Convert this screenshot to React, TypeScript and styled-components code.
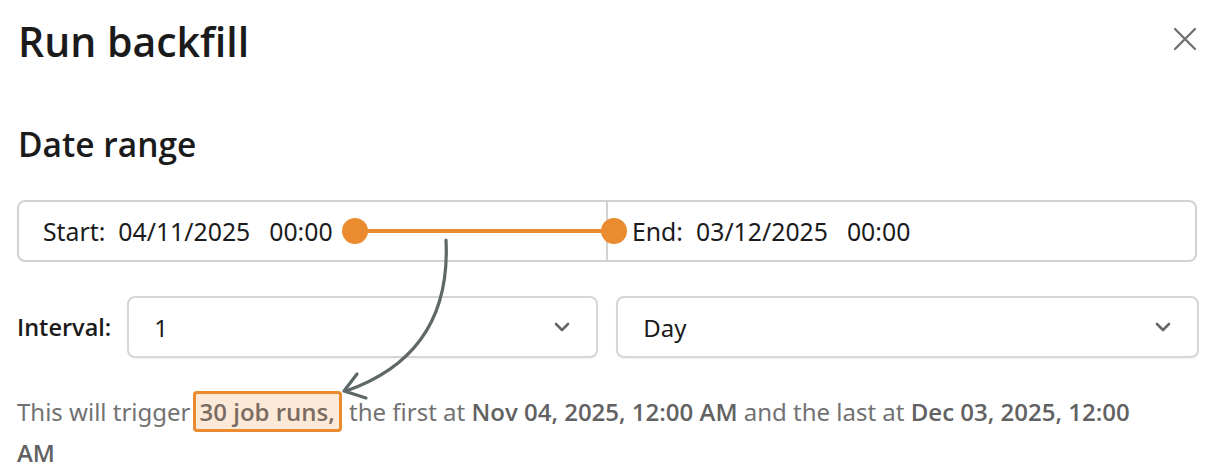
import styled, { createGlobalStyle } from "styled-components";

const Global = createGlobalStyle`
  html, body {
    margin: 0;
    padding: 0;
    background: #ffffff;
  }
  body {
    font-family: "Noto Sans", "Open Sans", sans-serif;
    color: #1b1b1b;
  }
`;

const semibold = `"Open Sans", "Noto Sans", sans-serif`;

const Dialog = styled.div`
  width: 1216px;
  box-sizing: border-box;
  padding: 16px 17px 0 17px;
`;

const Header = styled.div`
  display: flex;
  align-items: center;
  justify-content: space-between;
  height: 50px;
`;

const Title = styled.h1`
  margin: 0;
  font-family: ${semibold};
  font-size: 41px;
  line-height: 50px;
  font-weight: 600;
  color: #1b1b1b;
  padding-left: 1px;
`;

const CloseButton = styled.button`
  border: none;
  background: none;
  padding: 0;
  margin: 0 2px 5px 0;
  width: 24px;
  height: 24px;
  display: flex;
  align-items: center;
  justify-content: center;
  cursor: pointer;
`;

const Section = styled.h2`
  margin: 58px 0 0 1px;
  font-family: ${semibold};
  font-size: 33.5px;
  line-height: 40px;
  font-weight: 600;
  color: #1b1b1b;
`;

const RangeBox = styled.div`
  position: relative;
  margin-top: 36px;
  display: flex;
  height: 62px;
  box-sizing: border-box;
  border: 2px solid #d2d2d2;
  border-radius: 8px;
  width: 1180px;
`;

const RangeHalf = styled.div<{ $divider?: boolean }>`
  flex: 1;
  display: flex;
  align-items: center;
  padding: 0 24px;
  font-size: 24.8px;
  color: #1b1b1b;
  border-left: ${(p) => (p.$divider ? "2px solid #d2d2d2" : "none")};
`;

const FieldLabel = styled.span`
  margin-right: 13px;
`;

const Time = styled.span`
  margin-left: 19px;
`;

const Connector = styled.div`
  position: absolute;
  left: 323px;
  top: 50%;
  width: 285px;
  height: 26px;
  transform: translateY(-50%);
  display: flex;
  align-items: center;
`;

const Dot = styled.span`
  width: 26px;
  height: 26px;
  border-radius: 50%;
  background: #e98b2e;
  flex: 0 0 auto;
`;

const Line = styled.span`
  flex: 1;
  height: 4px;
  background: #e98b2e;
  margin: 0 -2px;
`;

const IntervalRow = styled.div`
  display: flex;
  align-items: center;
  margin-top: 34px;
  gap: 16px;
`;

const IntervalLabel = styled.span`
  font-family: ${semibold};
  font-size: 23.5px;
  font-weight: 600;
  color: #1b1b1b;
`;

const Select = styled.div<{ $width?: number }>`
  flex: ${(p) => (p.$width ? `0 0 ${p.$width}px` : "1")};
  height: 62px;
  box-sizing: border-box;
  border: 2px solid #d6d6d6;
  border-radius: 8px;
  display: flex;
  align-items: center;
  justify-content: space-between;
  padding: 0 26px 0 25px;
  font-size: 24px;
  color: #1b1b1b;
  box-shadow: 0 1px 2px rgba(0, 0, 0, 0.06);
  & + & {
    margin-left: 2px;
  }
`;

const Summary = styled.p`
  margin: 33px 0 0 0;
  font-size: 24px;
  line-height: 41px;
  color: #727272;
  width: 1150px;
`;

const Strong = styled.b`
  font-family: ${semibold};
  font-weight: 600;
  color: #626262;
`;

const Highlight = styled.span`
  padding: 1px 4px;
  margin: 0 1px 0 2px;
  border: 3px solid #e98b2e;
  border-radius: 4px;
  background: #fde9d8;
  font-family: ${semibold};
  font-weight: 600;
  color: #7a6c62;
`;

const Annotation = styled.svg`
  position: absolute;
  left: 0;
  top: 0;
  pointer-events: none;
`;

function Chevron() {
  return (
    <svg width="16" height="10" viewBox="0 0 16 10">
      <polyline
        points="2,2 8,8 14,2"
        fill="none"
        stroke="#666"
        strokeWidth="2.6"
        strokeLinecap="round"
        strokeLinejoin="round"
      />
    </svg>
  );
}

export default function App() {
  return (
    <>
      <Global />
      <Dialog>
        <Header>
          <Title>Run backfill</Title>
          <CloseButton aria-label="Close">
            <svg width="24" height="24" viewBox="0 0 24 24">
              <path
                d="M2 2 L22 22 M22 2 L2 22"
                stroke="#6f6f6f"
                strokeWidth="2.3"
                strokeLinecap="round"
              />
            </svg>
          </CloseButton>
        </Header>

        <Section>Date range</Section>

        <RangeBox>
          <RangeHalf>
            <FieldLabel>Start:</FieldLabel>
            04/11/2025<Time>00:00</Time>
          </RangeHalf>
          <RangeHalf $divider>
            <FieldLabel>End:</FieldLabel>
            03/12/2025<Time>00:00</Time>
          </RangeHalf>
          <Connector>
            <Dot />
            <Line />
            <Dot />
          </Connector>
        </RangeBox>

        <IntervalRow>
          <IntervalLabel>Interval:</IntervalLabel>
          <Select $width={471}>
            1
            <Chevron />
          </Select>
          <Select>
            Day
            <Chevron />
          </Select>
        </IntervalRow>

        <Summary>
          This will trigger<Highlight>30 job runs,</Highlight> the first at{" "}
          <Strong>Nov 04, 2025, 12:00 AM</Strong> and the last at{" "}
          <Strong>Dec 03, 2025, 12:00</Strong> <Strong>AM</Strong>
        </Summary>
      </Dialog>

      <Annotation width="1216" height="470" viewBox="0 0 1216 470">
        <path
          d="M446 240 C450 320, 412 368, 346 391"
          fill="none"
          stroke="#5f6868"
          strokeWidth="3.2"
          strokeLinecap="round"
        />
        <path
          d="M357 374 L344 391 L366 398"
          fill="none"
          stroke="#5f6868"
          strokeWidth="3.2"
          strokeLinecap="round"
          strokeLinejoin="round"
        />
      </Annotation>
    </>
  );
}
